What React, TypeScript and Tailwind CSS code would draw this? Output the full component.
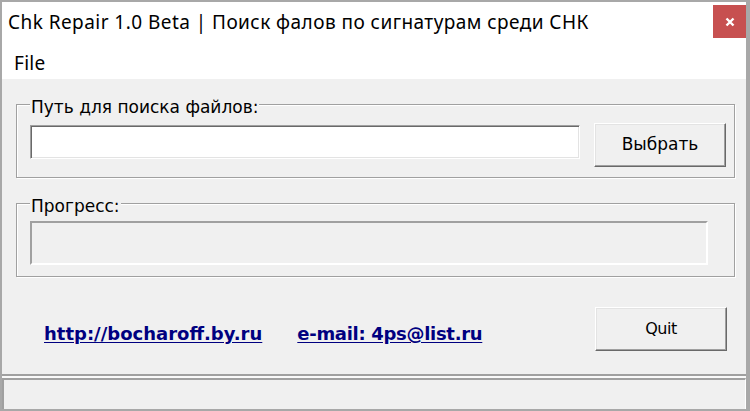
export default function App() {
  const dlg = "font-['DejaVu_Sans',sans-serif]";
  return (
    <div className="w-[750px] h-[411px] overflow-hidden bg-white border-t-2 border-l-2 border-b-2 border-r-4 border-[#a8a8a8] flex flex-col">
      {/* title bar */}
      <div className="h-[39px] flex items-center bg-white">
        <span className="pl-[6px] text-[19px] leading-[24px] tracking-[0.45px] text-black font-['Noto_Sans',sans-serif] whitespace-nowrap">
          Chk Repair 1.0 Beta | Поиск фалов по сигнатурам среди СНК
        </span>
        <div className="ml-auto w-[33px] h-[33px] bg-[#c75050] flex items-center justify-center">
          <svg width="10" height="10" viewBox="0 0 10 10">
            <path d="M1.5 1.5L8.5 8.5M8.5 1.5L1.5 8.5" stroke="white" strokeWidth="2.4" />
          </svg>
        </div>
      </div>
      {/* menu bar */}
      <div className="h-[38px] flex items-center pt-[6px] pl-[12px] bg-white">
        <span className="text-[19px] leading-[24px] tracking-[0.3px] text-black font-['Noto_Sans',sans-serif]">File</span>
      </div>
      {/* content */}
      <div className={`h-[297px] bg-[#f0f0f0] border-b-2 border-[#a0a0a0] pt-[25px] flex flex-col ${dlg}`}>
        {/* group 1 */}
        <div className="relative ml-[14px] w-[719px] h-[74px] border border-[#a0a0a0] shadow-[inset_1px_1px_0_#ffffff,1px_1px_0_#ffffff] pt-[18px] pl-[13px] flex items-start">
          <span className="absolute left-[13px] top-[-7px] px-[1px] bg-[#f0f0f0] text-[17px] leading-[19px] text-black whitespace-nowrap">
            Путь для поиска файлов:
          </span>
          <div className="mt-[2px] w-[550px] h-[34px] bg-white border border-t-[#a0a0a0] border-l-[#a0a0a0] border-b-white border-r-white shadow-[inset_1px_1px_0_#696969,inset_-1px_-1px_0_#e3e3e3]" />
          <button className="ml-[14px] w-[132px] h-[44px] bg-[#f0f0f0] border border-t-white border-l-white border-b-[#696969] border-r-[#696969] shadow-[inset_-1px_-1px_0_#a0a0a0,inset_1px_1px_0_#e3e3e3] text-[17px] text-black flex items-center justify-center">
            Выбрать
          </button>
        </div>
        {/* group 2 */}
        <div className="relative mt-[25px] ml-[14px] w-[719px] h-[74px] border border-[#a0a0a0] shadow-[inset_1px_1px_0_#ffffff,1px_1px_0_#ffffff] pt-[17px] pl-[13px]">
          <span className="absolute left-[13px] top-[-7px] px-[1px] bg-[#f0f0f0] text-[17px] leading-[19px] text-black whitespace-nowrap">
            Прогресс:
          </span>
          <div className="w-[678px] h-[44px] bg-[#f0f0f0] border-2 border-t-[#a0a0a0] border-l-[#a0a0a0] border-b-white border-r-white" />
        </div>
        {/* links row */}
        <div className="mt-[30px] h-[44px] flex items-start pl-[42px] pr-[19px]">
          <a href="#" className="mt-[17px] text-[18px] leading-[20px] font-bold text-[#000080] underline underline-offset-[2px] whitespace-nowrap">
            http://bocharoff.by.ru
          </a>
          <a href="#" className="ml-[35px] mt-[17px] text-[18px] leading-[20px] font-bold tracking-[-0.3px] text-[#000080] underline underline-offset-[2px] whitespace-nowrap">
            e-mail: 4ps@list.ru
          </a>
          <button className="ml-auto w-[132px] h-[44px] bg-[#f0f0f0] border border-t-white border-l-white border-b-[#696969] border-r-[#696969] shadow-[inset_-1px_-1px_0_#a0a0a0,inset_1px_1px_0_#e3e3e3] text-[16px] tracking-[-0.5px] text-black flex items-center justify-center">
            Quit
          </button>
        </div>
      </div>
      {/* separator */}
      <div className="h-[2px] bg-[#fafafa]" />
      {/* status bar */}
      <div className="h-[31px] bg-[#f0f0f0] border-t-2 border-l-2 border-r border-t-[#a0a0a0] border-l-[#a0a0a0] border-r-white" />
    </div>
  );
}
